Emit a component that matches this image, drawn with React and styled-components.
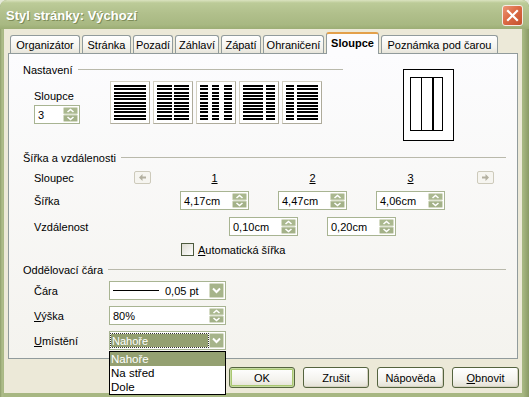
import React from 'react';
import styled, { createGlobalStyle } from 'styled-components';

const GlobalStyle = createGlobalStyle`
  html, body {
    margin: 0;
    padding: 0;
    background: #e6ead9;
  }
  body {
    font-family: "Liberation Sans", Arial, sans-serif;
    font-size: 11px;
    color: #000;
  }
`;

const OLIVE = '#94a071';

const Window = styled.div`
  width: 529px;
  height: 397px;
  display: flex;
  flex-direction: column;
  overflow: hidden;
  border-radius: 7px 7px 0 0;
  background: linear-gradient(to right, #8d9d6a 0, #aebd8a 2px, #a7b782 4px, #a7b782 calc(100% - 6px), #8a9a66 100%);
`;

const TitleBar = styled.div`
  height: 29px;
  flex: none;
  display: flex;
  align-items: center;
  justify-content: space-between;
  padding: 0 6px 0 6px;
  border-radius: 7px 7px 0 0;
  background: linear-gradient(to bottom, #dbe3c0 0%, #bccb98 10%, #b1c08c 45%, #a8b882 85%, #9cad75 100%);
`;

const Title = styled.div`
  font-size: 13px;
  font-weight: bold;
  color: #fff;
  text-shadow: 1px 1px 0 #7d8c58;
  padding-top: 2px;
`;

const CloseButton = styled.div`
  width: 21px;
  height: 21px;
  box-sizing: border-box;
  border: 1px solid #f4ede6;
  border-radius: 3px;
  background: linear-gradient(135deg, #ec9777 0%, #dc6b45 45%, #c4512d 100%);
  display: flex;
  align-items: center;
  justify-content: center;
  margin-top: 2px;
`;

const Body = styled.div`
  flex: 1;
  display: flex;
  flex-direction: column;
  margin: 0 7px 4px 4px;
  padding: 3px 4px 0 4px;
  background: #ece9d8;
`;

const TabRow = styled.div`
  height: 21px;
  display: flex;
  align-items: flex-end;
  gap: 2px;
  padding-left: 2px;
`;

const Tab = styled.div`
  width: ${p => p.$w}px;
  height: ${p => (p.$active ? 22 : 18)}px;
  box-sizing: border-box;
  display: flex;
  align-items: center;
  justify-content: center;
  border: 1px solid #919b9c;
  border-bottom: none;
  border-radius: 3px 3px 0 0;
  font-weight: ${p => (p.$active ? 'bold' : 'normal')};
  background: ${p => (p.$active ? '#fcfcfe' : 'linear-gradient(#ffffff, #f3f2ec 70%, #e6e4da)')};
  border-top: ${p => (p.$active ? '2px solid #e3a04a' : '1px solid #919b9c')};
  margin-bottom: ${p => (p.$active ? '-1px' : '0')};
  position: relative;
  z-index: ${p => (p.$active ? 2 : 0)};
  padding-bottom: ${p => (p.$active ? '2px' : '0')};
`;

const Panel = styled.div`
  height: 306px;
  box-sizing: border-box;
  border: 1px solid #919b9c;
  padding: 9px 11px 0 14px;
  background: linear-gradient(#fcfcfe, #f4f3ee);
  display: flex;
  flex-direction: column;
`;

const TopRow = styled.div`
  display: flex;
  align-items: flex-start;
`;

const Group = styled.div`
  width: ${p => p.$w}px;
  display: flex;
  flex-direction: column;
`;

const Legend = styled.div`
  height: 13px;
  display: flex;
  align-items: center;
  margin-top: ${p => p.$mt || 0}px;
  &::after {
    content: '';
    flex: 1;
    height: 1px;
    margin-left: 5px;
    background: #b9b9ab;
  }
`;

const ColumnsSetup = styled.div`
  display: flex;
  align-items: flex-end;
  padding-left: 11px;
  margin-top: 5px;
`;

const SpinCol = styled.div`
  display: flex;
  flex-direction: column;
  gap: 3px;
`;

const PatternGroup = styled.div`
  display: flex;
  gap: 3px;
  margin-left: 30px;
`;

const PatternButton = styled.div`
  width: 40px;
  height: 43px;
  box-sizing: border-box;
  border: 1px solid #d3d0c2;
  border-right-color: #aeab9b;
  border-bottom-color: #aeab9b;
  background: #fff;
  display: flex;
`;

const Preview = styled.div`
  margin-left: 60px;
  margin-top: 6px;
  display: flex;
`;

const Rows = styled.div`
  display: flex;
  flex-direction: column;
  gap: ${p => p.$gap}px;
  margin-top: ${p => p.$mt}px;
  padding-left: 11px;
`;

const Row = styled.div`
  display: flex;
  align-items: center;
  min-height: 13px;
`;

const RowLabel = styled.div`
  width: ${p => p.$w}px;
  flex: none;
`;

const Fields = styled.div`
  display: flex;
  gap: 29px;
  margin-left: ${p => p.$ml || 0}px;
`;

const ColHead = styled.div`
  width: 69px;
  text-align: center;
  text-decoration: underline;
`;

const NavButton = styled.div`
  width: 17px;
  height: 13px;
  box-sizing: border-box;
  border: 1px solid #cdcabb;
  border-radius: 2px;
  background: #f6f5f0;
  display: flex;
  align-items: center;
  justify-content: center;
  margin-left: ${p => p.$ml || 0}px;
`;

const Field = styled.div`
  width: ${p => p.$w}px;
  height: 19px;
  box-sizing: border-box;
  border: 1px solid #a8b492;
  background: #fff;
  display: flex;
  align-items: center;
  padding: 0 1px 0 3px;
  flex: none;
`;

const FieldText = styled.span`
  flex: 1;
`;

const Selection = styled.span`
  flex: 1;
  align-self: stretch;
  margin: 2px 1px 2px -2px;
  background: ${OLIVE};
  color: #fff;
  outline: 1px dotted #333;
  padding-left: 1px;
  display: flex;
  align-items: center;
`;

const CheckRow = styled.label`
  display: flex;
  align-items: center;
  gap: 4px;
  margin-left: 147px;
`;

const CheckBox = styled.span`
  width: 13px;
  height: 13px;
  box-sizing: border-box;
  border: 1px solid #4d5a3e;
  background: linear-gradient(135deg, #dcdbd1, #fff);
`;

const U = styled.span`
  text-decoration: underline;
`;

const ComboWrap = styled.div`
  position: relative;
`;

const DropList = styled.div`
  position: absolute;
  top: 20px;
  left: 0;
  width: 117px;
  box-sizing: border-box;
  border: 1px solid #000;
  background: #fff;
  z-index: 5;
`;

const DropItem = styled.div`
  height: 14px;
  line-height: 14px;
  padding-left: 1px;
  background: ${p => (p.$sel ? OLIVE : '#fff')};
  color: ${p => (p.$sel ? '#fff' : '#000')};
  font-size: 11.5px;
`;

const ButtonRow = styled.div`
  display: flex;
  justify-content: flex-end;
  gap: 8px;
  margin-top: 8px;
  margin-right: -1px;
`;

const Button = styled.div`
  width: ${p => p.$w}px;
  height: 21px;
  box-sizing: border-box;
  border: 1px solid #55643f;
  border-radius: 3px;
  background: linear-gradient(#ffffff, #f4f3ee 60%, #e3e0d4);
  display: flex;
  align-items: center;
  justify-content: center;
  box-shadow: ${p => (p.$default ? 'inset 0 0 0 1px #c6dba0, inset 0 0 0 2px #a9c771' : 'inset -1px -1px 0 #d6d2c2')};
`;

const Spin = () => (
  <svg width="15" height="15" viewBox="0 0 15 15">
    <rect x="0.5" y="0.5" width="14" height="6.5" rx="1" fill="#aab88f" stroke="#d6dcc6" />
    <rect x="0.5" y="8" width="14" height="6.5" rx="1" fill="#a3b188" stroke="#d6dcc6" />
    <path d="M4.5 5 L7.5 2.5 L10.5 5" stroke="#fff" strokeWidth="1.6" fill="none" />
    <path d="M4.5 10 L7.5 12.5 L10.5 10" stroke="#fff" strokeWidth="1.6" fill="none" />
  </svg>
);

const DropArrow = () => (
  <svg width="15" height="15" viewBox="0 0 15 15">
    <rect x="0.5" y="0.5" width="14" height="14" rx="1" fill="#a6b48a" stroke="#d6dcc6" />
    <path d="M4 5.5 L7.5 9 L11 5.5" stroke="#fff" strokeWidth="2" fill="none" />
  </svg>
);

const NavArrow = ({ dir }) => (
  <svg width="7" height="7" viewBox="0 0 7 7">
    <path
      d={dir === 'left' ? 'M0 3.5 L3.5 0 V2.5 H7 V4.5 H3.5 V7 Z' : 'M7 3.5 L3.5 0 V2.5 H0 V4.5 H3.5 V7 Z'}
      fill="#b3b0a0"
    />
  </svg>
);

const LINE_Y = [5, 8, 12, 15, 18, 22, 25, 28, 31, 35, 38];

const Pattern = ({ segs }) => (
  <svg width="38" height="41" viewBox="0 0 38 41" shapeRendering="crispEdges">
    {segs.map(([x, w]) =>
      LINE_Y.map(y => <rect key={`${x}-${y}`} x={x - 1} y={y - 2} width={w} height="2" fill="#000" />)
    )}
  </svg>
);

const patterns = [
  [[4, 32]],
  [[4, 15], [21, 15]],
  [[4, 8], [16, 7], [28, 8]],
  [[4, 20], [27, 9]],
  [[4, 8], [15, 21]],
];

const tabs = [
  ['Organizátor', 70],
  ['Stránka', 49],
  ['Pozadí', 40],
  ['Záhlaví', 44],
  ['Zápatí', 40],
  ['Ohraničení', 61],
  ['Sloupce', 53, true],
  ['Poznámka pod čarou', 117],
];

export default function App() {
  return (
    <>
      <GlobalStyle />
      <Window>
        <TitleBar>
          <Title>Styl stránky: Výchozí</Title>
          <CloseButton>
            <svg width="13" height="13" viewBox="0 0 13 13">
              <path d="M2 2 L11 11 M11 2 L2 11" stroke="#fff" strokeWidth="2.2" strokeLinecap="square" />
            </svg>
          </CloseButton>
        </TitleBar>
        <Body>
          <TabRow>
            {tabs.map(([label, w, active]) => (
              <Tab key={label} $w={w} $active={active}>{label}</Tab>
            ))}
          </TabRow>
          <Panel>
            <TopRow>
              <Group $w={320}>
                <Legend>Nastavení</Legend>
                <ColumnsSetup>
                  <SpinCol>
                    <span>Sloupce</span>
                    <Field $w={46}>
                      <FieldText>3</FieldText>
                      <Spin />
                    </Field>
                  </SpinCol>
                  <PatternGroup>
                    {patterns.map((segs, i) => (
                      <PatternButton key={i}>
                        <Pattern segs={segs} />
                      </PatternButton>
                    ))}
                  </PatternGroup>
                </ColumnsSetup>
              </Group>
              <Preview>
                <svg width="51" height="72" viewBox="0 0 51 72" shapeRendering="crispEdges">
                  <rect x="0.5" y="0.5" width="50" height="71" fill="#fff" stroke="#000" />
                  <rect x="7.5" y="8.5" width="32" height="53" fill="none" stroke="#000" />
                  <line x1="18.5" y1="8" x2="18.5" y2="62" stroke="#000" />
                  <rect x="29" y="8" width="2" height="54" fill="#000" />
                </svg>
              </Preview>
            </TopRow>

            <Legend $mt={10}>Šířka a vzdálenosti</Legend>
            <Rows $gap={7} $mt={7}>
              <Row>
                <RowLabel $w={100}>Sloupec</RowLabel>
                <NavButton><NavArrow dir="left" /></NavButton>
                <Fields $ml={29}>
                  <ColHead>1</ColHead>
                  <ColHead>2</ColHead>
                  <ColHead>3</ColHead>
                </Fields>
                <NavButton $ml={32}><NavArrow dir="right" /></NavButton>
              </Row>
              <Row>
                <RowLabel $w={146}>Šířka</RowLabel>
                <Fields>
                  {['4,17cm', '4,47cm', '4,06cm'].map(v => (
                    <Field key={v} $w={69}>
                      <FieldText>{v}</FieldText>
                      <Spin />
                    </Field>
                  ))}
                </Fields>
              </Row>
              <Row>
                <RowLabel $w={195}>Vzdálenost</RowLabel>
                <Fields>
                  {['0,10cm', '0,20cm'].map(v => (
                    <Field key={v} $w={69}>
                      <FieldText>{v}</FieldText>
                      <Spin />
                    </Field>
                  ))}
                </Fields>
              </Row>
              <Row>
                <CheckRow>
                  <CheckBox />
                  <span><U>A</U>utomatická šířka</span>
                </CheckRow>
              </Row>
            </Rows>

            <Legend $mt={7}>Oddělovací čára</Legend>
            <Rows $gap={6} $mt={5}>
              <Row>
                <RowLabel $w={75}>Čára</RowLabel>
                <Field $w={117}>
                  <svg width="46" height="3" viewBox="0 0 46 3">
                    <rect x="0" y="1" width="46" height="1" fill="#000" />
                  </svg>
                  <FieldText style={{ marginLeft: 6 }}>0,05 pt</FieldText>
                  <DropArrow />
                </Field>
              </Row>
              <Row>
                <RowLabel $w={75}><U>V</U>ýška</RowLabel>
                <Field $w={117}>
                  <FieldText>80%</FieldText>
                  <Spin />
                </Field>
              </Row>
              <Row>
                <RowLabel $w={75}><U>U</U>místění</RowLabel>
                <ComboWrap>
                  <Field $w={117}>
                    <Selection>Nahoře</Selection>
                    <DropArrow />
                  </Field>
                  <DropList>
                    <DropItem $sel>Nahoře</DropItem>
                    <DropItem>Na střed</DropItem>
                    <DropItem>Dole</DropItem>
                  </DropList>
                </ComboWrap>
              </Row>
            </Rows>
          </Panel>
          <ButtonRow>
            <Button $w={66} $default>OK</Button>
            <Button $w={66}>Zrušit</Button>
            <Button $w={67}>Nápověda</Button>
            <Button $w={67}><span><U>O</U>bnovit</span></Button>
          </ButtonRow>
        </Body>
      </Window>
    </>
  );
}
